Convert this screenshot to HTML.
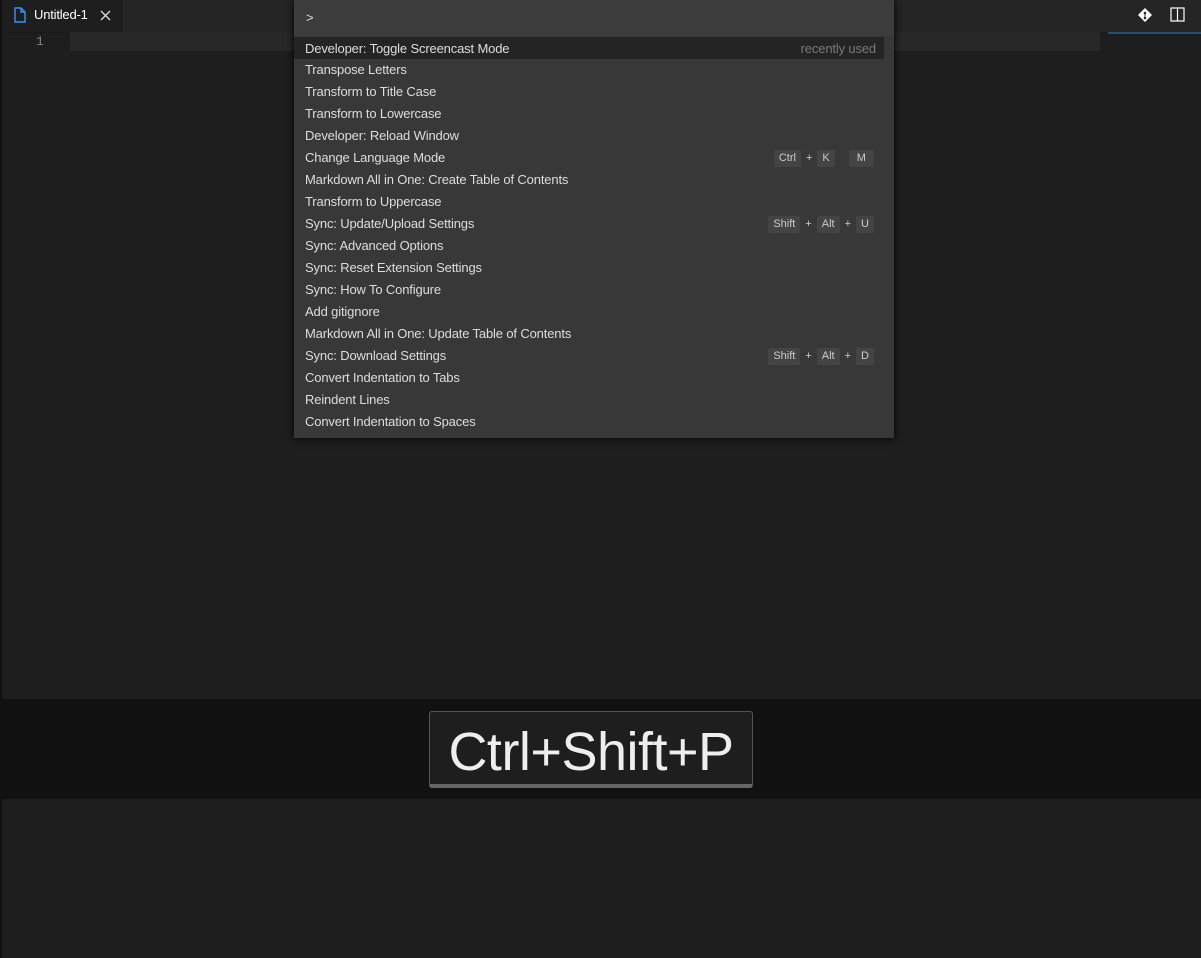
<!DOCTYPE html>
<html><head><style>
body{margin:0;width:1201px;height:958px;background:#1e1e1e;overflow:hidden;position:relative;font-family:"Segoe UI","Liberation Sans",sans-serif;color:#ccc}
.lb{position:absolute;left:0;top:0;width:2px;height:958px;background:#111}
.tabs{position:absolute;left:2px;top:0;right:0;height:32px;background:#252526;border-bottom:1px solid #191919}
.tab{position:absolute;left:0;top:0;width:119px;height:32px;background:#1e1e1e;border-right:1px solid #191919}
.tab span{position:absolute;left:32px;top:7px;font-size:13px;color:#fff;letter-spacing:-0.2px}
.curline{position:absolute;left:70px;top:32px;width:1030px;height:19px;background:#282828}
.ln{position:absolute;left:36px;top:34px;font-size:13px;color:#858585;font-family:"Liberation Mono",monospace}
.ruler{position:absolute;left:1108px;top:32px;width:93px;height:2px;background:#264f78}
.qi{position:absolute;left:294px;top:0;width:600px;height:438px;background:#383838;box-shadow:0 0 8px #000}
.inp{position:absolute;left:0;top:0;width:600px;height:36px;background:#3c3c3c}
.inp span{position:absolute;left:12px;top:10px;font-size:13px;color:#ddd}
.row{position:absolute;left:0;width:590px;height:22px;font-size:13px;line-height:22px;color:#ddd;letter-spacing:-0.15px}
.row .t{position:absolute;left:11px;top:1px}
.row.sel{background:#242424}
.ru{position:absolute;right:8px;top:1px;color:#7a7a7a}
.kb{position:absolute;right:9px;top:1px;font-size:11px;display:flex;align-items:center;height:22px;letter-spacing:0}
.k{background:#444;color:#ccc;padding:0 5px;height:17px;line-height:17px;border-radius:2px;margin:0 1px}
.p{margin:0 4px;color:#ccc}
.band{position:absolute;left:2px;top:699px;width:1199px;height:100px;background:#111}
.key{position:absolute;left:429px;top:711px;width:322px;height:72px;background:#1e1e1e;border:1px solid #555;border-bottom:4px solid #666;border-radius:3px;color:#eee;font-size:54px;line-height:80px;text-align:center;letter-spacing:-0.5px}
</style></head><body>
<div class="lb"></div>
<div class="tabs"><div class="tab">
<svg style="position:absolute;left:12px;top:7px" width="12" height="16" viewBox="0 0 12 16"><path d="M1 1h6l4 4v10H1z M7 1v4h4" fill="none" stroke="#3794ff" stroke-width="1.4"/></svg>
<span>Untitled-1</span>
<svg style="position:absolute;left:98px;top:10px" width="11" height="11" viewBox="0 0 11 11"><path d="M1 1l9 9M10 1l-9 9" stroke="#ddd" stroke-width="1.3"/></svg>
</div>
<svg style="position:absolute;left:1136px;top:8px" width="14" height="14" viewBox="0 0 14 14"><path d="M7 0l7 7-7 7-7-7z" fill="#fff"/><circle cx="7" cy="5" r="1.3" fill="#252526"/><circle cx="7" cy="10" r="1.3" fill="#252526"/><path d="M7 5v5" stroke="#252526" stroke-width="1"/></svg>
<svg style="position:absolute;left:1168px;top:7px" width="15" height="15" viewBox="0 0 15 15"><rect x="1" y="1" width="13" height="13" fill="none" stroke="#fff" stroke-width="1.2"/><path d="M7.5 1v13" stroke="#fff" stroke-width="1.2"/></svg>
</div>
<div class="curline"></div>
<div class="ln">1</div>
<div class="ruler"></div>
<div class="qi">
<div class="inp"><span>&gt;</span></div>
<div class="row sel" style="top:37px"><span class="t">Developer: Toggle Screencast Mode</span><span class="ru">recently used</span></div>
<div class="row" style="top:58px"><span class="t">Transpose Letters</span></div>
<div class="row" style="top:80px"><span class="t">Transform to Title Case</span></div>
<div class="row" style="top:102px"><span class="t">Transform to Lowercase</span></div>
<div class="row" style="top:124px"><span class="t">Developer: Reload Window</span></div>
<div class="row" style="top:146px"><span class="t">Change Language Mode</span><div class="kb"><span class="k">Ctrl</span><span class="p">+</span><span class="k">K</span><span style="width:12px"></span><span class="k">&nbsp;M&nbsp;</span></div></div>
<div class="row" style="top:168px"><span class="t">Markdown All in One: Create Table of Contents</span></div>
<div class="row" style="top:190px"><span class="t">Transform to Uppercase</span></div>
<div class="row" style="top:212px"><span class="t">Sync: Update/Upload Settings</span><div class="kb"><span class="k">Shift</span><span class="p">+</span><span class="k">Alt</span><span class="p">+</span><span class="k">U</span></div></div>
<div class="row" style="top:234px"><span class="t">Sync: Advanced Options</span></div>
<div class="row" style="top:256px"><span class="t">Sync: Reset Extension Settings</span></div>
<div class="row" style="top:278px"><span class="t">Sync: How To Configure</span></div>
<div class="row" style="top:300px"><span class="t">Add gitignore</span></div>
<div class="row" style="top:322px"><span class="t">Markdown All in One: Update Table of Contents</span></div>
<div class="row" style="top:344px"><span class="t">Sync: Download Settings</span><div class="kb"><span class="k">Shift</span><span class="p">+</span><span class="k">Alt</span><span class="p">+</span><span class="k">D</span></div></div>
<div class="row" style="top:366px"><span class="t">Convert Indentation to Tabs</span></div>
<div class="row" style="top:388px"><span class="t">Reindent Lines</span></div>
<div class="row" style="top:410px"><span class="t">Convert Indentation to Spaces</span></div>
</div>
<div class="band"></div>
<div class="key">Ctrl+Shift+P</div>
</body></html>
